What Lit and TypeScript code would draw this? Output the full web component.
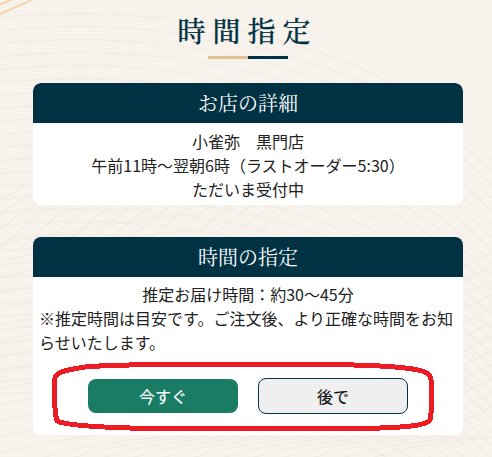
import { LitElement, html, css, svg } from "lit";
import { customElement } from "lit/decorators.js";

const sweep = (i: number) => {
  const y = 20 + i * 13;
  return svg`<path d="M-20 ${y} C 90 ${y - 14}, 220 ${y - 6}, 340 ${y + 40} S 470 ${y + 130}, 520 ${y + 160}" />`;
};
const fan = (i: number) => {
  const x = -60 + i * 20;
  return svg`<path d="M${x} 250 C ${x + 40} 205, ${x + 110} 165, ${x + 210} 140" />`;
};
const low = (i: number) => {
  const y = 220 + i * 16;
  return svg`<path d="M-20 ${y + 30} C 60 ${y + 10}, 130 ${y}, 200 ${y - 6}" />`;
};
const right = (i: number) => {
  const y = 250 + i * 14;
  return svg`<path d="M440 ${y + 30} C 460 ${y + 18}, 480 ${y + 8}, 510 ${y - 6}" />`;
};
const bottom = (i: number) => {
  const x = 10 + i * 30;
  return svg`<path d="M${x} 470 C ${x + 40} 452, ${x + 100} 440, ${x + 170} 436" />`;
};

@customElement("app-root")
export class AppRoot extends LitElement {
  static styles = css`
    :host {
      display: block;
      position: relative;
      width: 492px;
      height: 457px;
      overflow: hidden;
      background: #f7f2ec;
      font-family: "Noto Sans CJK JP", "Noto Sans", sans-serif;
      color: #222;
    }
    .bg { position: absolute; inset: 0; width: 492px; height: 457px; }
    .bg .lines { fill: none; stroke: #f1ebe2; stroke-width: 1.2; }
    .bg .gold { fill: none; stroke: #f0d6ab; stroke-width: 2; }
    .page {
      position: relative;
      display: flex;
      flex-direction: column;
      align-items: center;
      padding: 10px 0 0 4px;
    }
    h1 {
      margin: 0;
      font-family: "Noto Serif CJK JP", "Noto Serif JP", "Liberation Serif", serif;
      font-weight: 500;
      -webkit-text-stroke: 0.25px currentColor;
      font-size: 28px;
      line-height: 40px;
      letter-spacing: 7px;
      margin-left: -1px;
      color: #013243;
    }
    .rule { display: flex; margin-top: 6px; height: 3px; }
    .rule i { display: block; width: 40px; height: 3px; background: #e2c193; }
    .rule i + i { background: #013243; }
    .card {
      width: 430px;
      background: #fff;
      border-radius: 8px;
      overflow: hidden;
      font-size: 16px;
      line-height: 24px;
    }
    .first { margin-top: 24px; }
    .second { margin-top: 32px; position: relative; overflow: visible; }
    .card h2 {
      margin: 0;
      height: 40px;
      border-radius: 8px 8px 0 0;
      background: #013243;
      color: #fff;
      font-family: "Noto Serif CJK JP", "Noto Sans CJK JP", sans-serif;
      font-weight: 400;
      font-size: 20px;
      line-height: 40px;
      text-align: center;
    }
    .body { padding: 6px 5px 4px; text-align: center; }
    .second .body { padding: 5px 6px 0; height: 88px; box-sizing: border-box; }
    .left { text-align: left; }
    .actions {
      display: flex;
      justify-content: center;
      align-items: center;
      gap: 20px;
      height: 62px;
      margin-bottom: 8px;
    }
    button {
      box-sizing: border-box;
      width: 150px;
      font-family: inherit;
      font-size: 16px;
      font-weight: 400;
      -webkit-text-stroke: 0.15px currentColor;
      border-radius: 8px;
      padding: 0;
    }
    .now { height: 34px; border: none; background: #1b7c66; color: #fff; }
    .later { height: 36px; border: 1px solid #013243; background: #efefef; color: #111; }
    .mark {
      position: absolute;
      left: 0;
      top: 0;
      width: 430px;
      height: 220px;
      pointer-events: none;
      overflow: visible;
    }
    .mark path { fill: none; stroke: #ed1c24; stroke-width: 5; shape-rendering: crispEdges; }
  `;

  render() {
    return html`
      <svg class="bg" viewBox="0 0 492 457" aria-hidden="true">
        <g class="lines">
          ${Array.from({ length: 30 }, (_, i) => sweep(i))}
          ${Array.from({ length: 16 }, (_, i) => fan(i))}
          ${Array.from({ length: 14 }, (_, i) => low(i))}
          ${Array.from({ length: 12 }, (_, i) => right(i))}
          ${Array.from({ length: 12 }, (_, i) => bottom(i))}
        </g>
        <g class="gold">
          <path d="M-4 6 L 16 -2" />
          <path d="M-4 16 L 36 -2" />
        </g>
      </svg>
      <div class="page">
        <h1>時間指定</h1>
        <div class="rule"><i></i><i></i></div>
        <section class="card first">
          <h2>お店の詳細</h2>
          <div class="body">
            小雀弥　黒門店<br />午前11時～翌朝6時（ラストオーダー5:30）<br />ただいま受付中
          </div>
        </section>
        <section class="card second">
          <h2>時間の指定</h2>
          <div class="body">
            推定お届け時間：約30～45分
            <div class="left">※推定時間は目安です。ご注文後、より正確な時間をお知らせいたします。</div>
          </div>
          <div class="actions">
            <button class="now">今すぐ</button>
            <button class="later">後で</button>
          </div>
          <svg class="mark" viewBox="33 237 430 220" aria-hidden="true">
            <path d="M55 378 C 56 372, 66 370, 85 367 C 130 363, 200 365, 250 365 C 310 364, 370 364, 405 368 C 422 370, 431 372, 431 380 C 432 395, 432 410, 430 420 C 425 426, 405 427, 380 428 C 300 428, 200 428, 130 428 C 95 427, 65 425, 57 421 C 54 410, 54 390, 55 378 Z" />
          </svg>
        </section>
      </div>
    `;
  }
}
